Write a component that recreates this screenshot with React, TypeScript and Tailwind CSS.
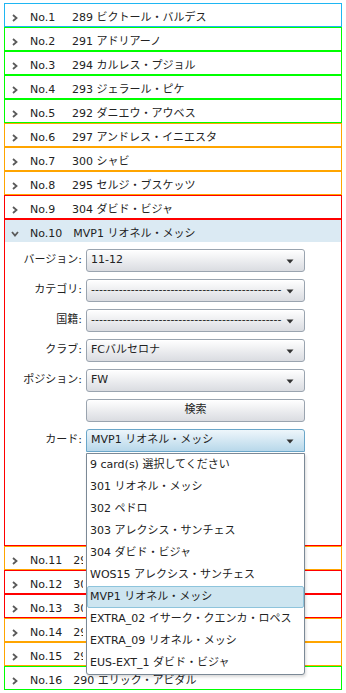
import React from "react";

type Row = { no: number; name: string; border: string; clip?: boolean };

const rowsTop: Row[] = [
  { no: 1, name: "289 ビクトール・バルデス", border: "border-[#1fb6f2]" },
  { no: 2, name: "291 アドリアーノ", border: "border-[#00ff00]" },
  { no: 3, name: "294 カルレス・プジョル", border: "border-[#00ff00]" },
  { no: 4, name: "293 ジェラール・ピケ", border: "border-[#00ff00]" },
  { no: 5, name: "292 ダニエウ・アウベス", border: "border-[#00ff00]" },
  { no: 6, name: "297 アンドレス・イニエスタ", border: "border-[#ffa500]" },
  { no: 7, name: "300 シャビ", border: "border-[#ffa500]" },
  { no: 8, name: "295 セルジ・ブスケッツ", border: "border-[#ffa500]" },
  { no: 9, name: "304 ダビド・ビジャ", border: "border-[#ff0000]" },
];

const rowsBottom: Row[] = [
  { no: 11, name: "298 セスク・ファブレガス", border: "border-[#ffa500]", clip: true },
  { no: 12, name: "301 リオネル・メッシ", border: "border-[#ff0000]", clip: true },
  { no: 13, name: "302 ペドロ", border: "border-[#ff0000]", clip: true },
  { no: 14, name: "296 セイドゥ・ケイタ", border: "border-[#ffa500]", clip: true },
  { no: 15, name: "299 ハビエル・マスチェラーノ", border: "border-[#ffa500]", clip: true },
  { no: 16, name: "290 エリック・アビダル", border: "border-[#00ff00]" },
];

const cards = [
  "9 card(s) 選択してください",
  "301 リオネル・メッシ",
  "302 ペドロ",
  "303 アレクシス・サンチェス",
  "304 ダビド・ビジャ",
  "WOS15 アレクシス・サンチェス",
  "MVP1 リオネル・メッシ",
  "EXTRA_02 イサーク・クエンカ・ロペス",
  "EXTRA_09 リオネル・メッシ",
  "EUS-EXT_1 ダビド・ビジャ",
];

const DASHES = "------------------------------------------------";

function ChevronRight() {
  return (
    <svg width="6" height="8" viewBox="0 0 6 8" className="ml-[7px] shrink-0">
      <path d="M1 1 L4.5 4 L1 7" fill="none" stroke="#5a5a5a" strokeWidth="1.8" />
    </svg>
  );
}

function ChevronDown() {
  return (
    <svg width="8" height="6" viewBox="0 0 8 6" className="ml-[6px] mr-[-1px] shrink-0">
      <path d="M1 1 L4 4.5 L7 1" fill="none" stroke="#5a5a5a" strokeWidth="1.8" />
    </svg>
  );
}

function Header({ no, name, open, clip }: { no: number; name: string; open?: boolean; clip?: boolean }) {
  return (
    <div className={`flex h-[22px] items-center pt-[6px] ${open ? "bg-[#dbeaf3]" : ""}`}>
      {open ? <ChevronDown /> : <ChevronRight />}
      <span className="ml-[12px] min-w-[31px] whitespace-nowrap">No.{no}</span>
      <span className={`ml-[11px] whitespace-nowrap ${clip ? "max-w-[10px] overflow-hidden" : ""}`}>{name}</span>
    </div>
  );
}

function Arrow() {
  return (
    <svg width="8" height="5" viewBox="0 0 8 5" className="absolute right-[10px] top-[9px]">
      <path d="M0.5 0.5 L7.5 0.5 L4 4.5 Z" fill="#333" />
    </svg>
  );
}

function Select({ value }: { value: string }) {
  return (
    <div className="relative flex h-[23px] w-[219px] items-center rounded-[3px] border border-[#9aa4af] bg-gradient-to-b from-[#ffffff] to-[#dadce1] pl-[4px] shadow-[inset_0_1px_0_#ffffff]">
      <span className="whitespace-nowrap overflow-hidden">{value}</span>
      <Arrow />
    </div>
  );
}

function FormRow({ label, children }: { label: string; children: React.ReactNode }) {
  return (
    <div className="mb-[7px] flex h-[23px] items-center">
      <div className="w-[77px] shrink-0 text-right">{label}</div>
      <div className="ml-[4px]">{children}</div>
    </div>
  );
}

export default function App() {
  return (
    <div
      className="min-h-[693px] w-[346px] bg-white px-[4px] pt-[3px] text-[11px] text-[#222]"
      style={{ fontFamily: '"DejaVu Sans", "Noto Sans CJK JP", sans-serif' }}
    >
      {rowsTop.map((r) => (
        <div key={r.no} className={`border ${r.border}`}>
          <Header no={r.no} name={r.name} />
        </div>
      ))}
      <div className="relative border border-[#ff0000]">
        <Header no={10} name="MVP1 リオネル・メッシ" open />
        <div className="h-[303px] pt-[7px]">
          <FormRow label="バージョン:">
            <Select value="11-12" />
          </FormRow>
          <FormRow label="カテゴリ:">
            <Select value={DASHES} />
          </FormRow>
          <FormRow label="国籍:">
            <Select value={DASHES} />
          </FormRow>
          <FormRow label="クラブ:">
            <Select value="FCバルセロナ" />
          </FormRow>
          <FormRow label="ポジション:">
            <Select value="FW" />
          </FormRow>
          <FormRow label="">
            <div className="flex h-[23px] w-[219px] items-center justify-center rounded-[3px] border border-[#9aa4af] bg-gradient-to-b from-[#ffffff] to-[#dadce1]">
              検索
            </div>
          </FormRow>
          <FormRow label="カード:">
            <div className="relative">
              <div className="relative flex h-[23px] w-[219px] items-center rounded-t-[3px] border border-[#6aa6c9] bg-gradient-to-b from-[#eef6fb] to-[#b8d8ea] pl-[4px]">
                <span className="whitespace-nowrap">MVP1 リオネル・メッシ</span>
                <Arrow />
              </div>
              <div className="absolute left-0 top-[24px] z-10 w-[219px] rounded-b-[3px] border border-[#7b8996] bg-white shadow-[1px_2px_3px_rgba(0,0,0,0.15)]">
                {cards.map((c, i) =>
                  i === 6 ? (
                    <div
                      key={c}
                      className="flex h-[22px] items-center whitespace-nowrap rounded-[2px] border border-[#8ec4dc] bg-[#cde5f0] pl-[2px]"
                    >
                      {c}
                    </div>
                  ) : (
                    <div key={c} className="flex h-[22px] items-center whitespace-nowrap pl-[3px]">
                      {c}
                    </div>
                  )
                )}
              </div>
            </div>
          </FormRow>
        </div>
      </div>
      {rowsBottom.map((r) => (
        <div key={r.no} className={`border ${r.border}`}>
          <Header no={r.no} name={r.name} clip={r.clip} />
        </div>
      ))}
    </div>
  );
}
